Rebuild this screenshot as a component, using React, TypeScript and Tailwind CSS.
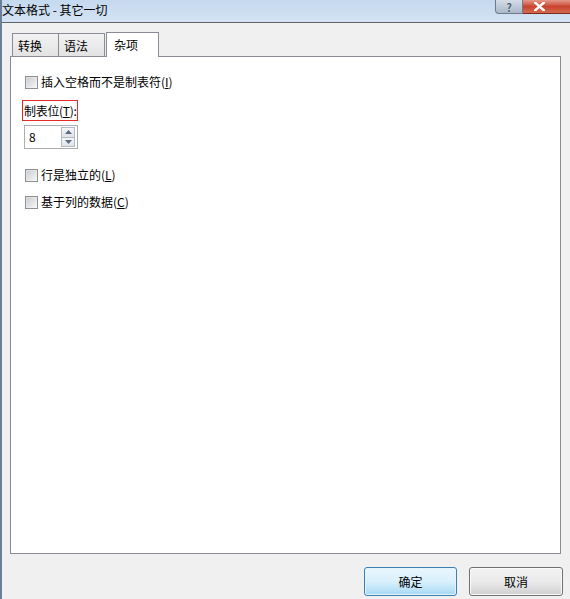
import React from "react";

function Checkbox() {
  return (
    <span className="w-[13px] h-[13px] border border-[#8e8f8f] bg-gradient-to-br from-[#dcdcdc] to-[#f8f8f8] flex items-center justify-center shrink-0">
      <span className="w-[9px] h-[9px] bg-gradient-to-br from-[#cbcfd5] to-[#f4f4f4]" />
    </span>
  );
}

function CheckRow({ label, u }: { label: string; u: string }) {
  return (
    <div className="flex items-center gap-[3px] h-[14px] whitespace-nowrap">
      <Checkbox />
      <span className="leading-none">
        {label}(<span className="underline">{u}</span>)
      </span>
    </div>
  );
}

export default function App() {
  return (
    <div
      className="w-[570px] h-[599px] bg-[#f0f0f0] border-l-2 border-l-[#6b7f99] flex flex-col text-[12px] text-black overflow-hidden"
      style={{ fontFamily: '"Noto Sans CJK SC", "Microsoft YaHei", sans-serif' }}
    >
      {/* title bar */}
      <div className="h-[23px] flex items-start bg-gradient-to-b from-[#c4d9ef] to-[#d4e3f3] border-b border-b-[#5f6266] shrink-0">
        <span className="pt-[1px] leading-[18px] text-[12px] whitespace-nowrap">文本格式 - 其它一切</span>
        <div className="ml-auto flex h-[14px]">
          <div className="w-[28px] h-[14px] border border-[#6d7b8c] border-t-0 rounded-bl-[4px] bg-gradient-to-b from-[#d5dde8] to-[#a9b8c9] flex items-center justify-center text-[#4b5a6e] font-bold text-[11px] leading-[12px] [text-shadow:0_0_1px_#ffffff]">
            ?
          </div>
          <div className="w-[47px] h-[14px] border-b border-[#7a2a1f] bg-gradient-to-b from-[#e49a8a] via-[#c8432f] to-[#d46a4e] flex items-center pl-[11px]">
            <svg width="11" height="9" viewBox="0 0 11 9">
              <path d="M1 0.5 L10 8.5 M10 0.5 L1 8.5" stroke="#ffffff" strokeWidth="2.4" strokeLinecap="square" />
            </svg>
          </div>
        </div>
      </div>

      {/* tabs */}
      <div className="flex items-end pl-[10px] h-[33px] shrink-0">
        <div className="h-[23px] w-[47px] border border-[#898c95] border-b-0 bg-gradient-to-b from-[#f2f2f2] to-[#e3e3e3] flex items-start pt-[3px] pl-[5px]">
          转换
        </div>
        <div className="h-[23px] w-[46px] border border-[#898c95] border-b-0 border-l-0 bg-gradient-to-b from-[#f2f2f2] to-[#e3e3e3] flex items-start pt-[3px] pl-[5px]">
          语法
        </div>
        <div className="h-[25px] w-[53px] ml-[1px] border border-[#898c95] border-b-0 bg-white flex items-start pt-[3px] pl-[7px] relative z-10 -mb-[1px]">
          杂项
        </div>
      </div>

      {/* panel */}
      <div className="ml-[8px] w-[551px] h-[498px] border border-[#898c95] bg-white shrink-0 flex flex-col pl-[14px] pt-[18px]">
        <CheckRow label="插入空格而不是制表符" u="I" />
        <div className="mt-[11px] w-[56px] h-[21px] -ml-[3px] border border-[#e52a2a] flex items-center pl-[1px] leading-none whitespace-nowrap tracking-[-0.3px]">
          制表位(<span className="underline">T</span>):
        </div>
        <div className="mt-[4px] w-[54px] h-[24px] -ml-[1px] border border-[#abadb3] flex items-stretch">
          <span className="flex-1 flex items-center pl-[4px]">8</span>
          <div className="w-[16px] flex flex-col py-[1px] pr-[2px]">
            <div className="flex-1 border border-[#b5b9c1] bg-gradient-to-b from-[#f5f6f8] to-[#dfe3e9] flex items-center justify-center">
              <svg width="7" height="4" viewBox="0 0 7 4"><path d="M0 4 L3.5 0 L7 4 Z" fill="#5a6b84" /></svg>
            </div>
            <div className="flex-1 border border-[#b5b9c1] border-t-0 bg-gradient-to-b from-[#f5f6f8] to-[#dfe3e9] flex items-center justify-center">
              <svg width="7" height="4" viewBox="0 0 7 4"><path d="M0 0 L3.5 4 L7 0 Z" fill="#5a6b84" /></svg>
            </div>
          </div>
        </div>
        <div className="mt-[19px]">
          <CheckRow label="行是独立的" u="L" />
        </div>
        <div className="mt-[13px]">
          <CheckRow label="基于列的数据" u="C" />
        </div>
      </div>

      {/* buttons */}
      <div className="flex justify-end gap-[12px] pr-[7px] mt-[13px]">
        <div className="w-[93px] h-[29px] rounded-[3px] border border-[#3c7fb1] bg-gradient-to-b from-[#eaf6fd] via-[#d9f0fc] to-[#a7d9f5] shadow-[inset_0_0_0_1px_#e5f4fc] flex items-center justify-center">
          确定
        </div>
        <div className="w-[94px] h-[29px] rounded-[3px] border border-[#707070] bg-gradient-to-b from-[#f2f2f2] via-[#ebebeb] to-[#cfcfcf] shadow-[inset_0_0_0_1px_#fbfbfb] flex items-center justify-center">
          取消
        </div>
      </div>
    </div>
  );
}
